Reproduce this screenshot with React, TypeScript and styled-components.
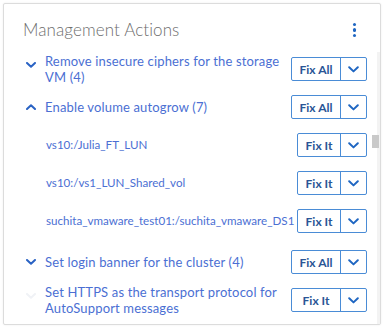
import React from "react";
import styled, { createGlobalStyle } from "styled-components";

const Global = createGlobalStyle`
  html, body { margin: 0; padding: 0; background: #ffffff; }
  body { font-family: Lato, "Liberation Sans", sans-serif; }
  * { box-sizing: border-box; }
`;

const Card = styled.div`
  position: relative;
  margin: 3px;
  width: 378px;
  height: 322px;
  border: 1px solid #dcdcdc;
  border-radius: 2px;
  background: #fff;
  box-shadow: 0 0 2px rgba(0,0,0,0.08);
  overflow: hidden;
`;

const Header = styled.div`
  display: flex;
  align-items: center;
  justify-content: space-between;
  height: 46px;
  padding: 4px 24px 0 19px;
`;

const Title = styled.div`
  font-size: 17px;
  font-weight: 300;
  color: #6e6e6e;
  letter-spacing: 0.1px;
`;

const Kebab = styled.div`
  display: flex;
  flex-direction: column;
  gap: 2px;
  align-items: center;
  padding-top: 2px;
  span {
    width: 3.4px;
    height: 3.4px;
    border-radius: 50%;
    background: #1f66c2;
  }
`;

const List = styled.div`
  display: flex;
  flex-direction: column;
`;

const Row = styled.div<{ $sub?: boolean }>`
  display: flex;
  align-items: center;
  min-height: 38px;
  padding: 0 13px 0 ${(p) => (p.$sub ? 42 : 22)}px;
`;

const Toggle = styled.div<{ $faint?: boolean; $top?: boolean }>`
  width: 10px;
  flex: none;
  margin-right: 9px;
  display: flex;
  align-items: center;
  color: ${(p) => (p.$faint ? "#f0f2f6" : "#2a63c4")};
  align-self: ${(p) => (p.$top ? "flex-start" : "center")};
  margin-top: ${(p) => (p.$top ? 12 : 0)}px;
`;

const Label = styled.div<{ $sub?: boolean }>`
  flex: 1;
  min-width: 0;
  font-size: ${(p) => (p.$sub ? 11.6 : 13)}px;
  line-height: 16px;
  color: #4b6fd3;
  padding-right: 8px;
  letter-spacing: ${(p) => (p.$sub ? 0 : 0.15)}px;
`;

const Group = styled.div<{ $wide?: boolean }>`
  flex: none;
  display: flex;
  height: 24px;
  width: ${(p) => (p.$wide ? 76 : 70)}px;
  border: 1px solid #4a8cd6;
  border-radius: 2px;
  background: #fff;
`;

const Main = styled.div`
  flex: 1;
  display: flex;
  align-items: center;
  justify-content: center;
  font-size: 12px;
  font-weight: 700;
  color: #2a5596;
  border-right: 1px solid #4a8cd6;
`;

const Drop = styled.div`
  width: 25px;
  flex: none;
  display: flex;
  align-items: center;
  justify-content: center;
  color: #1f66c2;
`;

const Track = styled.div`
  position: absolute;
  right: 0;
  top: 48px;
  bottom: 0;
  width: 3px;
  background: #f3f3f3;
`;

const Thumb = styled.div`
  position: absolute;
  right: 1px;
  top: 131px;
  width: 7px;
  height: 13px;
  background: #c9c9c9;
`;

const Chevron = ({ up }: { up?: boolean }) => (
  <svg width="10" height="6" viewBox="0 0 10 6">
    <path
      d={up ? "M1 5 L5 1.2 L9 5" : "M1 1 L5 4.8 L9 1"}
      fill="none"
      stroke="currentColor"
      strokeWidth="2"
      strokeLinecap="round"
      strokeLinejoin="round"
    />
  </svg>
);

const SmallChevron = () => (
  <svg width="11" height="7" viewBox="0 0 11 7">
    <path d="M1.2 1.3 L5.5 5.4 L9.8 1.3" fill="none" stroke="currentColor" strokeWidth="2" strokeLinecap="round" strokeLinejoin="round" />
  </svg>
);

const Action = ({ label, wide }: { label: string; wide?: boolean }) => (
  <Group $wide={wide}>
    <Main>{label}</Main>
    <Drop>
      <SmallChevron />
    </Drop>
  </Group>
);

export default function App() {
  return (
    <>
      <Global />
      <Card>
        <Header>
          <Title>Management Actions</Title>
          <Kebab>
            <span />
            <span />
            <span />
          </Kebab>
        </Header>
        <List>
          <Row>
            <Toggle $top><Chevron /></Toggle>
            <Label>Remove insecure ciphers for the storage VM (4)</Label>
            <Action label="Fix All" wide />
          </Row>
          <Row>
            <Toggle><Chevron up /></Toggle>
            <Label>Enable volume autogrow (7)</Label>
            <Action label="Fix All" wide />
          </Row>
          <Row $sub>
            <Label $sub>vs10:/Julia_FT_LUN</Label>
            <Action label="Fix It" />
          </Row>
          <Row $sub>
            <Label $sub>vs10:/vs1_LUN_Shared_vol</Label>
            <Action label="Fix It" />
          </Row>
          <Row $sub style={{ marginBottom: 3 }}>
            <Label $sub>suchita_vmaware_test01:/suchita_vmaware_DS1</Label>
            <Action label="Fix It" />
          </Row>
          <Row>
            <Toggle><Chevron /></Toggle>
            <Label>Set login banner for the cluster (4)</Label>
            <Action label="Fix All" wide />
          </Row>
          <Row>
            <Toggle $faint $top><Chevron /></Toggle>
            <Label>Set HTTPS as the transport protocol for AutoSupport messages</Label>
            <Action label="Fix It" wide />
          </Row>
        </List>
        <Track />
        <Thumb />
      </Card>
    </>
  );
}
